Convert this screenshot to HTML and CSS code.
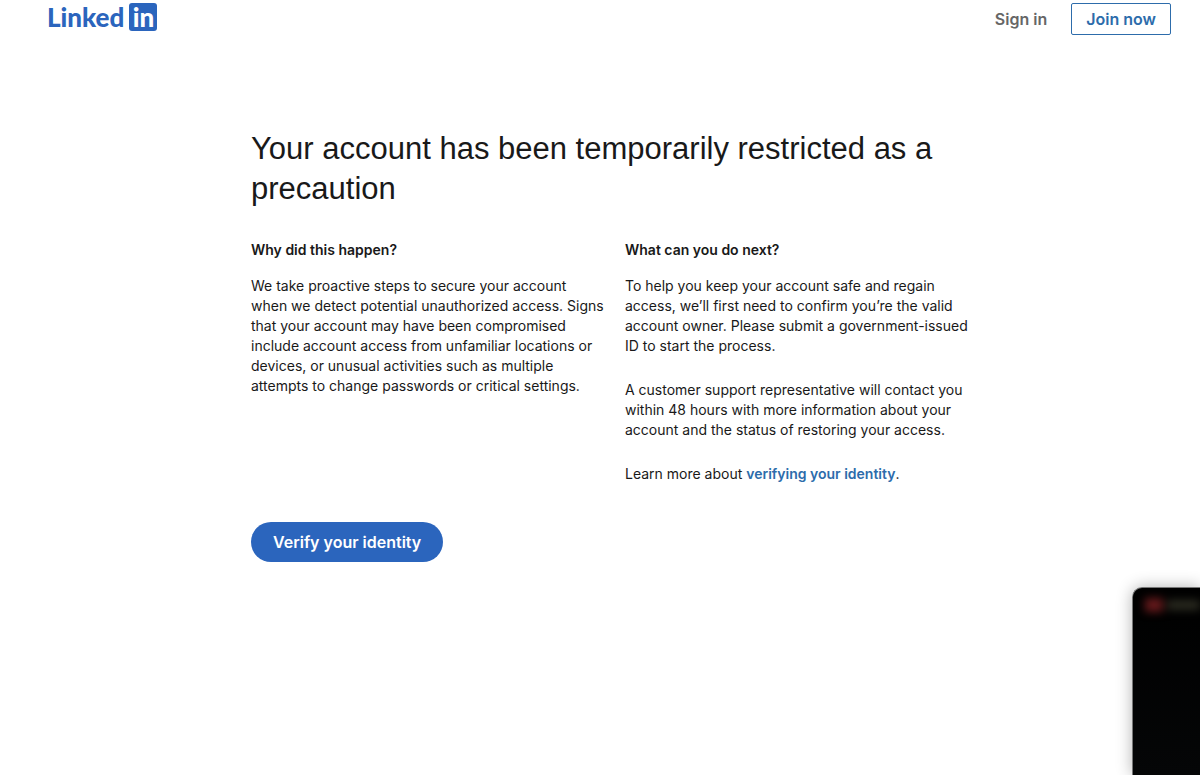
FILE: index.html
```
<!DOCTYPE html>
<html lang="en">
<head>
    <meta charset="UTF-8">
    <meta name="viewport" content="width=device-width, initial-scale=1.0">
    <title>Account restricted | LinkedIn</title>
    <link rel="stylesheet" href="styles.css">
</head>
<body>
    <header class="header">
        <a class="logo" href="#">Linked<span class="logo-box">in</span></a>
        <nav class="nav">
            <a class="sign-in" href="#">Sign in</a>
            <a class="join" href="#">Join now</a>
        </nav>
    </header>

    <main class="content">
        <h1>Your account has been temporarily restricted as a precaution</h1>
        <div class="columns">
            <section>
                <h2>Why did this happen?</h2>
                <p>We take proactive steps to secure your account when we detect potential unauthorized access. Signs that your account may have been compromised include account access from unfamiliar locations or devices, or unusual activities such as multiple attempts to change passwords or critical settings.</p>
            </section>
            <section>
                <h2>What can you do next?</h2>
                <p>To help you keep your account safe and regain access, we’ll first need to confirm you’re the valid account owner. Please submit a government-issued ID to start the process.</p>
                <p>A customer support representative will contact you within 48 hours with more information about your account and the status of restoring your access.</p>
                <p>Learn more about <a class="link" href="#">verifying your identity</a>.</p>
            </section>
        </div>
        <button class="verify" type="button">Verify your identity</button>
    </main>

    <div class="window" aria-hidden="true">
        <div class="window-bar">
            <span class="window-dot"></span>
            <span class="window-title"></span>
        </div>
    </div>
</body>
</html>
```

FILE: styles.css
```
* {
    box-sizing: border-box;
}
body {
    margin: 0;
    background-color: #fff;
    color: #191919;
    font-family: Inter, "Liberation Sans", sans-serif;
    font-size: 14px;
    line-height: 20px;
}
a {
    text-decoration: none;
}
.header {
    display: flex;
    justify-content: space-between;
    align-items: flex-start;
    padding: 3px 29px 0 47px;
}
.logo {
    display: flex;
    align-items: center;
    gap: 5px;
    color: #2b65bd;
    font-family: Lato, sans-serif;
    font-size: 26px;
    font-weight: 900;
    line-height: 28px;
}
.logo-box {
    width: 28px;
    height: 28px;
    border-radius: 3px;
    background-color: #2b65bd;
    color: #fff;
    text-align: center;
}
.nav {
    display: flex;
    align-items: center;
    gap: 24px;
    font-size: 16px;
    font-weight: 600;
}
.sign-in {
    color: #666;
}
.join {
    padding: 5px 14px;
    border: 1px solid #2d6cab;
    border-radius: 2px;
    color: #2d6cab;
}
.content {
    max-width: 746px;
    margin: 94px auto 0;
    padding-left: 24px;
}
h1 {
    margin: 0 0 31px;
    font-family: "Liberation Sans", Arial, sans-serif;
    font-size: 31px;
    font-weight: 400;
    line-height: 40px;
}
h2 {
    margin: 0 0 16px;
    font-size: 14px;
    font-weight: 600;
    line-height: 20px;
}
.columns {
    display: grid;
    grid-template-columns: 59fr 58fr;
    gap: 20px;
}
p {
    margin: 0 0 24px;
}
.link {
    color: #2d6cab;
    font-weight: 600;
}
.verify {
    margin-top: 14px;
    padding: 10px 22px;
    border: none;
    border-radius: 20px;
    background-color: #2b65bd;
    color: #fff;
    font-family: inherit;
    font-size: 16px;
    font-weight: 600;
    line-height: 20px;
    cursor: pointer;
}
/* dark window peeking in from the corner */
.window {
    position: fixed;
    right: 0;
    bottom: 0;
    width: 68px;
    height: 188px;
    border: 1px solid #777;
    border-width: 1px 0 0 1px;
    border-top-left-radius: 10px;
    background: linear-gradient(#000, #050607);
    box-shadow: 0 0 16px rgba(0, 0, 0, 0.3);
    overflow: hidden;
}
.window-bar {
    display: flex;
    align-items: center;
    gap: 4px;
    padding: 10px 0 0 12px;
    filter: blur(4px);
}
.window-dot {
    width: 18px;
    height: 14px;
    background-color: #64191b;
}
.window-title {
    flex: 1;
    height: 10px;
    background-color: #2a2a20;
}
```
